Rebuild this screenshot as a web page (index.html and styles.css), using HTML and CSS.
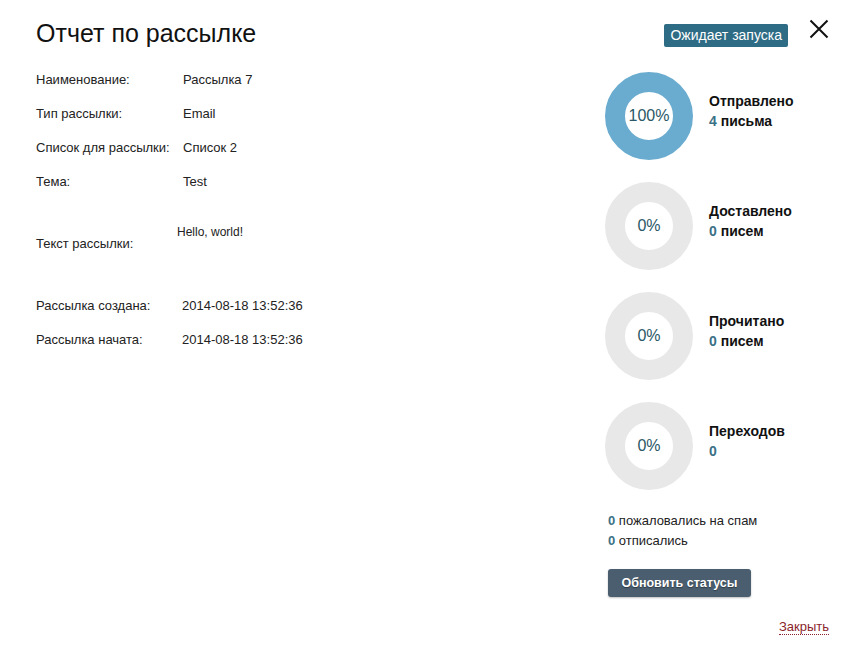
FILE: index.html
```html
<!DOCTYPE html>
<html lang="ru">
<head>
<meta charset="utf-8">
<title>Отчет по рассылке</title>
<link rel="stylesheet" href="styles.css">
</head>
<body>
<div class="dialog">
  <header class="head">
    <h1 class="title">Отчет по рассылке</h1>
    <div class="head-right">
      <span class="badge">Ожидает запуска</span>
      <button class="close" aria-label="Закрыть">
        <svg width="20" height="20" viewBox="0 0 20 20"><path d="M1.5 1.5 L18.5 18.5 M18.5 1.5 L1.5 18.5" stroke="#111" stroke-width="2" fill="none"/></svg>
      </button>
    </div>
  </header>
  <div class="body">
    <div class="info">
      <div class="row"><span class="lbl">Наименование:</span><span class="val">Рассылка 7</span></div>
      <div class="row"><span class="lbl">Тип рассылки:</span><span class="val">Email</span></div>
      <div class="row"><span class="lbl">Список для рассылки:</span><span class="val">Список 2</span></div>
      <div class="row"><span class="lbl">Тема:</span><span class="val">Test</span></div>
      <div class="row row-text"><span class="lbl">Текст рассылки:</span><span class="val val-text">Hello, world!</span></div>
      <div class="row"><span class="lbl">Рассылка создана:</span><span class="val val-date">2014-08-18 13:52:36</span></div>
      <div class="row"><span class="lbl">Рассылка начата:</span><span class="val val-date">2014-08-18 13:52:36</span></div>
    </div>
    <div class="stats">
      <div class="stat">
        <div class="donut donut-full">100%</div>
        <div class="stat-text"><div class="stat-name">Отправлено</div><div class="stat-count"><span class="num">4</span> письма</div></div>
      </div>
      <div class="stat">
        <div class="donut">0%</div>
        <div class="stat-text"><div class="stat-name">Доставлено</div><div class="stat-count"><span class="num">0</span> писем</div></div>
      </div>
      <div class="stat">
        <div class="donut">0%</div>
        <div class="stat-text"><div class="stat-name">Прочитано</div><div class="stat-count"><span class="num">0</span> писем</div></div>
      </div>
      <div class="stat">
        <div class="donut">0%</div>
        <div class="stat-text"><div class="stat-name">Переходов</div><div class="stat-count"><span class="num">0</span></div></div>
      </div>
      <div class="extra">
        <div><span class="num">0</span> пожаловались на спам</div>
        <div><span class="num">0</span> отписались</div>
      </div>
      <button class="refresh">Обновить статусы</button>
    </div>
  </div>
  <footer class="foot"><a class="close-link" href="#">Закрыть</a></footer>
</div>
</body>
</html>
```
FILE: styles.css
```css
html, body {
  margin: 0;
  padding: 0;
  background: #fff;
}
body {
  font-family: "Liberation Sans", Arial, sans-serif;
  color: #222;
  font-size: 13px;
}
.dialog {
  width: 847px;
  height: 648px;
  box-sizing: border-box;
  padding: 19px 18px 0 36px;
}
.head {
  display: flex;
  justify-content: space-between;
  align-items: flex-start;
  margin-bottom: 15px;
}
.title {
  margin: 0;
  font-size: 25px;
  line-height: 28px;
  font-weight: normal;
  color: #111;
}
.head-right {
  display: flex;
  align-items: flex-start;
  gap: 21px;
}
.badge {
  margin-top: 5px;
  background: #2e6b84;
  color: #fff;
  font-size: 14px;
  line-height: 23px;
  height: 23px;
  padding: 0 6px;
  border-radius: 2px;
}
.close {
  border: 0;
  background: none;
  padding: 0;
  width: 20px;
  height: 20px;
  cursor: pointer;
}
.close svg { display: block; }
.body {
  display: flex;
}
.info {
  width: 569px;
}
.row {
  display: flex;
  align-items: center;
  height: 34px;
}
.lbl {
  width: 147px;
}
.row-text {
  height: 90px;
}
.val-text {
  align-self: flex-start;
  margin-top: 27px;
  margin-left: -6px;
  font-size: 12px;
}
.val-date {
  margin-left: -1px;
}
.stats {
  margin-top: 10px;
  width: 205px;
}
.stat {
  display: flex;
  gap: 16px;
  height: 88px;
  margin-bottom: 22px;
}
.donut {
  width: 88px;
  height: 88px;
  box-sizing: border-box;
  border-radius: 50%;
  border: 20px solid #e8e8e8;
  display: flex;
  align-items: center;
  justify-content: center;
  font-size: 16px;
  color: #2a5866;
  flex: none;
}
.donut-full {
  border-color: #6aaccf;
}
.stat-text {
  padding-top: 19px;
  font-weight: bold;
  font-size: 14px;
  line-height: 20px;
  color: #111;
}
.num {
  color: #3a7186;
  font-weight: bold;
}
.extra {
  margin-top: -1px;
  margin-left: 3px;
  font-size: 13px;
  line-height: 20px;
  color: #222;
}
.refresh {
  display: block;
  margin: 18px 0 0 3px;
  width: 143px;
  height: 28px;
  border: 0;
  border-radius: 3px;
  background: #4a5e6f;
  color: #fff;
  font-family: "Liberation Sans", Arial, sans-serif;
  font-weight: bold;
  font-size: 12.5px;
  text-shadow: 0 1px 1px rgba(0,0,0,0.4);
  box-shadow: 0 1px 2px rgba(0,0,0,0.25);
  padding: 0;
}
.foot {
  text-align: right;
  margin-top: 22px;
}
.close-link {
  color: #8b1f2c;
  font-size: 13px;
  line-height: 16px;
  text-decoration: none;
  border-bottom: 1px dotted #8b1f2c;
}
```
